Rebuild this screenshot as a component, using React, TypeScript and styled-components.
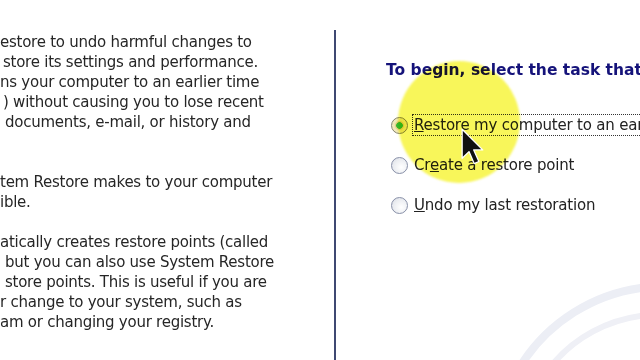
import React from 'react'
import styled, { createGlobalStyle } from 'styled-components'

const GlobalStyle = createGlobalStyle`
    html, body {
        margin: 0;
        padding: 0;
        background: #ffffff;
    }
    body {
        font-family: "DejaVu Sans", Tahoma, Verdana, sans-serif;
    }
`

const Screen = styled.div`
    position: relative;
    width: 640px;
    height: 360px;
    overflow: hidden;
    background: #ffffff;
    display: grid;
    grid-template-columns: 334px 2px 1fr;
`

const InfoPanel = styled.div`
    padding-top: 32px;
    overflow: hidden;
`

const Paragraph = styled.div`
    margin-bottom: 20px;
`

const Line = styled.div<{ $indent: number }>`
    height: 20px;
    line-height: 20px;
    padding-left: ${p => p.$indent}px;
    font-size: 15px;
    letter-spacing: -0.25px;
    color: #262626;
    white-space: nowrap;
`

const Divider = styled.div`
    margin-top: 30px;
    background: #3f4872;
`

const TaskPanel = styled.div`
    position: relative;
    padding: 60px 0 0 50px;
    overflow: hidden;
`

const Heading = styled.div`
    position: relative;
    height: 20px;
    line-height: 20px;
    font-size: 15.5px;
    font-weight: bold;
    color: #15137a;
    white-space: nowrap;
`

const Options = styled.div`
    position: relative;
    margin-top: 35px;
    display: flex;
    flex-direction: column;
    gap: 20px;
`

const Option = styled.label`
    display: flex;
    align-items: center;
    gap: 6px;
    height: 20px;
    margin-left: 5px;
    font-size: 15px;
    letter-spacing: -0.2px;
    color: #222222;
    white-space: nowrap;
`

const Radio = styled.span<{ $checked?: boolean }>`
    flex: none;
    width: 17px;
    height: 17px;
    border-radius: 50%;
    box-sizing: border-box;
    border: 1.5px solid ${p => (p.$checked ? '#86846c' : '#8890a8')};
    background: ${p =>
        p.$checked
            ? 'radial-gradient(circle at 50% 50%, #36b936 0 3px, #d9c878 3.6px, #efe6b0 5px, #f6f2d6 100%)'
            : 'radial-gradient(circle at 62% 62%, #ffffff 0, #eceef2 55%, #d6d9e2 100%)'};
`

const FocusLabel = styled.span`
    outline: 1px dotted #333333;
    outline-offset: 1px;
    padding-right: 40px;
`

const AccessKey = styled.span`
    text-decoration: underline;
`

const Highlight = styled.div`
    position: absolute;
    left: 398px;
    top: 61px;
    width: 122px;
    height: 122px;
    border-radius: 50%;
    background: #f8f65a;
    mix-blend-mode: multiply;
    filter: blur(1px);
    pointer-events: none;
`

const Cursor = styled.svg`
    position: absolute;
    left: 460px;
    top: 127px;
    pointer-events: none;
`

const Watermark = styled.svg`
    position: absolute;
    right: 0;
    bottom: 0;
    pointer-events: none;
`

const infoText: { indent: number; text: string }[][] = [
    [
        { indent: 0, text: 'estore to undo harmful changes to' },
        { indent: 3, text: 'store its settings and performance.' },
        { indent: 0, text: 'ns your computer to an earlier time' },
        { indent: 3, text: ') without causing you to lose recent' },
        { indent: 5, text: 'documents, e-mail, or history and' },
        { indent: 0, text: '' },
    ],
    [
        { indent: 0, text: 'tem Restore makes to your computer' },
        { indent: 0, text: 'ible.' },
    ],
    [
        { indent: 0, text: 'atically creates restore points (called' },
        { indent: 5, text: 'but you can also use System Restore' },
        { indent: 5, text: 'store points. This is useful if you are' },
        { indent: 0, text: 'r change to your system, such as' },
        { indent: 0, text: 'am or changing your registry.' },
    ],
]

const App: React.FC = () => {
    return (
        <>
            <GlobalStyle />
            <Screen>
                <InfoPanel>
                    {infoText.map((para, i) => (
                        <Paragraph key={i}>
                            {para.map((l, j) => (
                                <Line key={j} $indent={l.indent}>{l.text}</Line>
                            ))}
                        </Paragraph>
                    ))}
                </InfoPanel>

                <Divider />

                <TaskPanel>
                    <Watermark width="130" height="95" viewBox="0 0 130 95">
                        <path d="M 8 105 A 170 170 0 0 1 140 22" fill="none" stroke="#eceef5" strokeWidth="8" />
                        <path d="M 38 105 A 140 140 0 0 1 140 50" fill="none" stroke="#eff0f6" strokeWidth="6" />
                    </Watermark>
                    <Heading>To begin, select the task that you want to perform:</Heading>
                    <Options>
                        <Option>
                            <Radio $checked />
                            <FocusLabel><AccessKey>R</AccessKey>estore my computer to an earlier time</FocusLabel>
                        </Option>
                        <Option>
                            <Radio />
                            <span>Cr<AccessKey>e</AccessKey>ate a restore point</span>
                        </Option>
                        <Option>
                            <Radio />
                            <span><AccessKey>U</AccessKey>ndo my last restoration</span>
                        </Option>
                    </Options>
                </TaskPanel>
            </Screen>
            <Highlight />
            <Cursor width="30" height="40" viewBox="0 0 14 18.5">
                <path d="M1 1 L1 14.5 L4.2 11.4 L6.6 17 L8.8 16 L6.4 10.6 L10.6 10.6 Z" fill="#111111" stroke="#ffffff" strokeWidth="0.6" strokeLinejoin="round" />
            </Cursor>
        </>
    )
}

export default App
